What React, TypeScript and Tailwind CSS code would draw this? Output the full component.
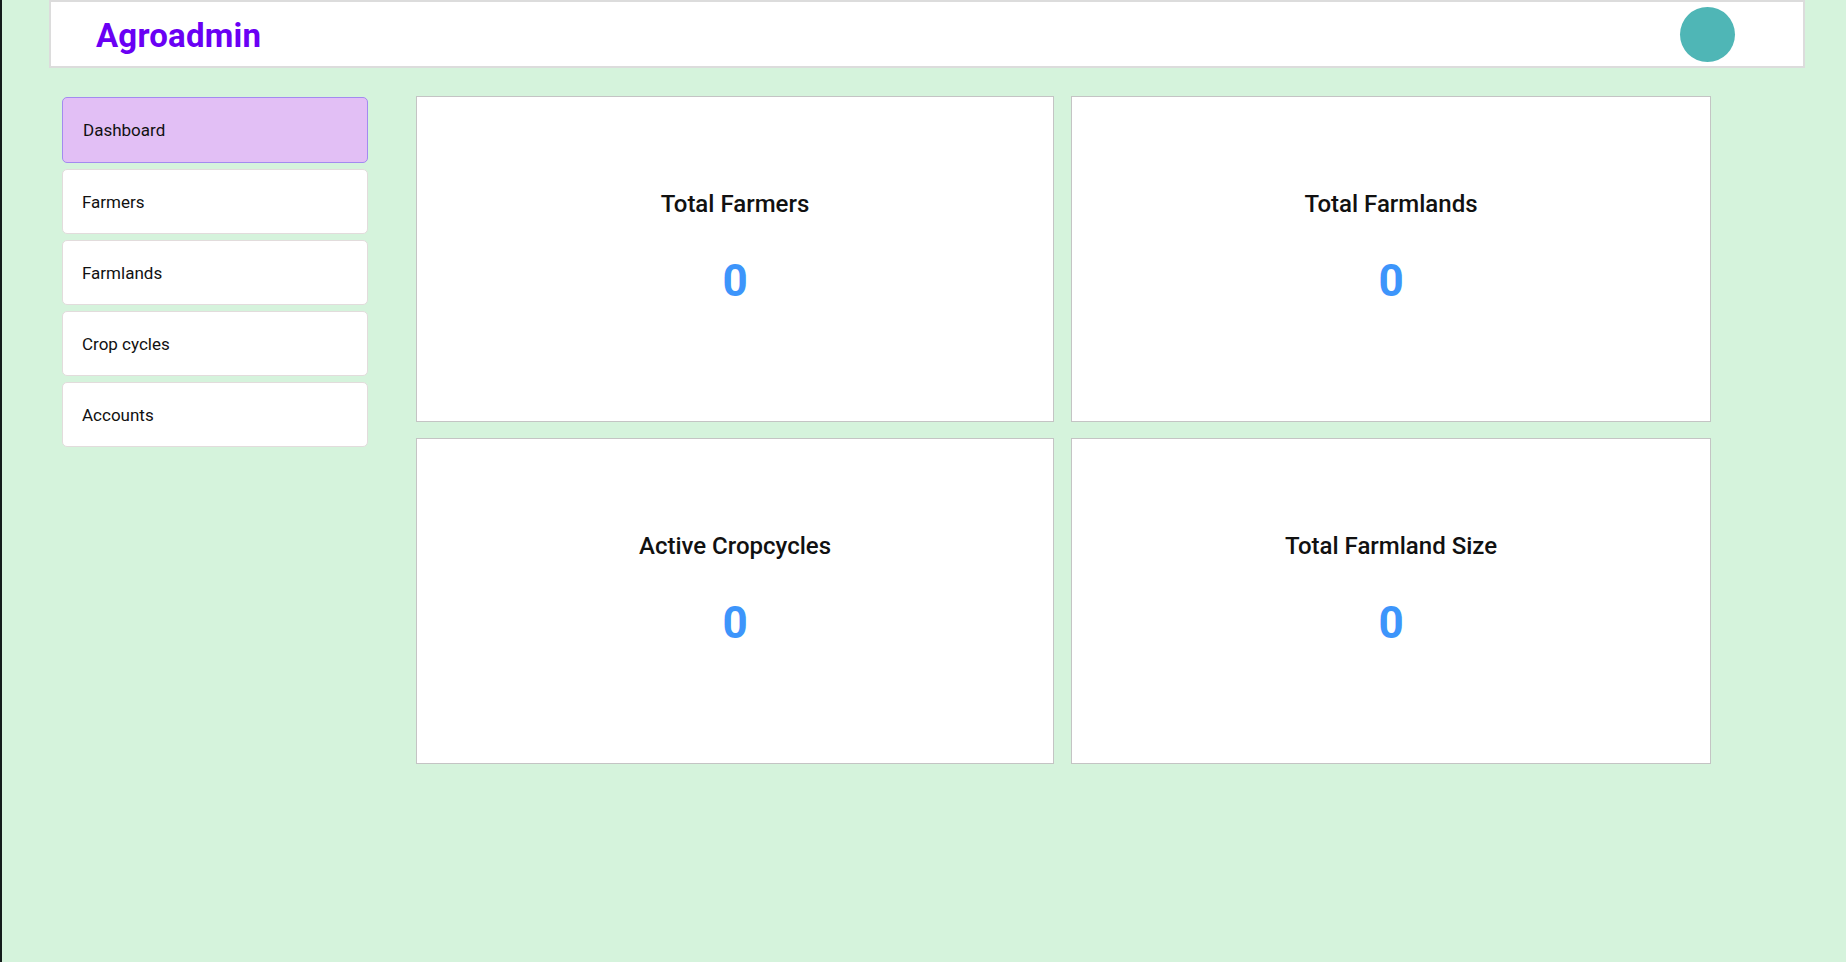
import React from "react";

const navItems = ["Dashboard", "Farmers", "Farmlands", "Crop cycles", "Accounts"];
const cards = ["Total Farmers", "Total Farmlands", "Active Cropcycles", "Total Farmland Size"];

export default function App() {
  return (
    <div
      className="min-h-screen bg-[#d5f3dc] border-l-2 border-[#141b1b] pl-[47px] pr-[41px]"
      style={{ fontFamily: "Roboto, 'Open Sans', sans-serif" }}
    >
      <header className="h-[68px] border-2 border-[#dcdcdc] bg-white flex items-center justify-between pl-[45px] pr-[68px]">
        <h1 className="pt-[3px] text-[33px] font-bold text-[#6a00f4] leading-none tracking-[0.2px]">Agroadmin</h1>
        <div className="w-[55px] h-[55px] rounded-full bg-[#4fb6b6]" />
      </header>
      <div className="flex items-start mt-[29px] pl-[13px]">
        <nav className="w-[306px] flex flex-col gap-[6px]">
          {navItems.map((item, i) =>
            i === 0 ? (
              <div
                key={item}
                className="h-[66px] flex items-center pl-[20px] pt-[2px] rounded-[5px] border border-[#a38af0] bg-[#e2bff5] text-[17px] text-[#111]"
              >
                {item}
              </div>
            ) : (
              <div
                key={item}
                className="h-[65px] flex items-center pl-[19px] pt-[2px] rounded-[5px] border border-[#e2dcdc] bg-white text-[17px] text-[#111]"
              >
                {item}
              </div>
            )
          )}
        </nav>
        <div className="ml-[48px] -mt-px grid grid-cols-[638px_640px] gap-x-[17px] gap-y-[16px]">
          {cards.map((c) => (
            <div
              key={c}
              className="h-[326px] border border-[#c4c4c4] bg-white flex flex-col items-center pt-[93px]"
            >
              <h2 className="text-[24px] leading-[28px] font-medium text-[#111]">{c}</h2>
              <div className="mt-[37px] text-[44px] leading-[52px] font-bold text-[#3d95fb]">0</div>
            </div>
          ))}
        </div>
      </div>
    </div>
  );
}
